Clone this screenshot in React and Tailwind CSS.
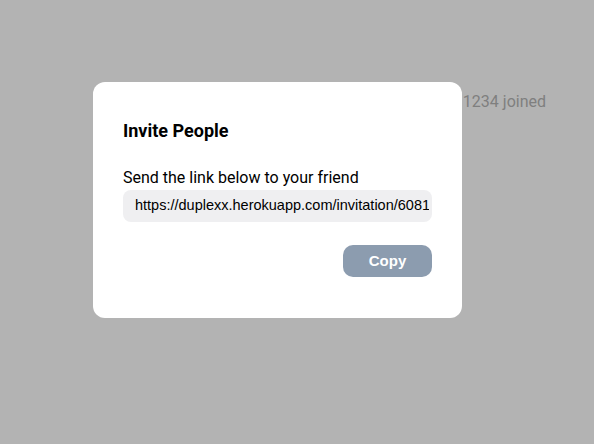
export default function App() {
  return (
    <div className="relative h-[444px] w-[594px] overflow-hidden bg-[#b3b3b3] font-['Roboto',sans-serif]">
      {/* page content behind overlay */}
      <div className="absolute right-[48px] top-[91px] text-[16px] leading-[22px] text-[#7f7f7f]">
        Members 1234 joined
      </div>

      <div className="absolute left-[93px] top-[82px] w-[369px] h-[236px] rounded-[12px] bg-white px-[30px] pt-[37px]">
        <h2 className="text-[18px] font-bold leading-[24px] text-black">Invite People</h2>
        <p className="mt-[24px] text-[16px] leading-[22px] text-black">Send the link below to your friend</p>
        <div className="mt-[1px] h-[32px] w-[309px] rounded-[8px] bg-[#efeff1] pl-[12px] pr-[3px] flex items-center">
          <div className="overflow-hidden whitespace-nowrap font-['Liberation_Sans',Arial,sans-serif] text-[14.5px] text-black">
            https://duplexx.herokuapp.com/invitation/6081431
          </div>
        </div>
        <div className="mt-[23px] flex justify-end">
          <button className="h-[32px] w-[89px] rounded-[10px] bg-[#8c9caf] font-['Liberation_Sans',Arial,sans-serif] text-[15px] font-bold text-white">
            Copy
          </button>
        </div>
      </div>
    </div>
  );
}
